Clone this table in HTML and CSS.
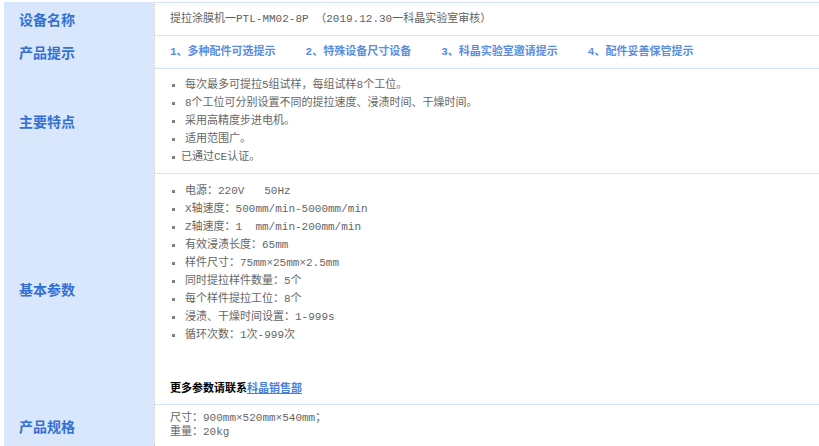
FILE: index.html
```html
<!DOCTYPE html>
<html lang="zh-CN">
<head>
    <meta charset="UTF-8">
    <meta name="viewport" content="width=device-width, initial-scale=1.0">
    <title>提拉涂膜机 PTL-MM02-8P</title>
    <link rel="stylesheet" href="styles.css">
</head>
<body>
    <div class="spec">
        <div class="row">
            <div class="label">设备名称</div>
            <div class="value single">提拉涂膜机一PTL-MM02-8P&nbsp;（2019.12.30一科晶实验室审核）</div>
        </div>
        <div class="row">
            <div class="label">产品提示</div>
            <div class="value single tips">
                <span>1、多种配件可选提示</span>
                <span>2、特殊设备尺寸设备</span>
                <span>3、科晶实验室邀请提示</span>
                <span>4、配件妥善保管提示</span>
            </div>
        </div>
        <div class="row">
            <div class="label">主要特点</div>
            <div class="value block features">
                <ul class="dots">
                    <li>每次最多可提拉5组试样，每组试样8个工位。</li>
                    <li>8个工位可分别设置不同的提拉速度、浸渍时间、干燥时间。</li>
                    <li>采用高精度步进电机。</li>
                    <li>适用范围广。</li>
                    <li class="tight">已通过CE认证。</li>
                </ul>
            </div>
        </div>
        <div class="row">
            <div class="label">基本参数</div>
            <div class="value block params">
                <ul class="dots">
                    <li>电源：220V&nbsp;&nbsp;&nbsp;50Hz</li>
                    <li>X轴速度：500mm/min-5000mm/min</li>
                    <li>Z轴速度：1&nbsp;&nbsp;mm/min-200mm/min</li>
                    <li>有效浸渍长度：65mm</li>
                    <li>样件尺寸：75mm×25mm×2.5mm</li>
                    <li>同时提拉样件数量：5个</li>
                    <li>每个样件提拉工位：8个</li>
                    <li>浸渍、干燥时间设置：1-999s</li>
                    <li>循环次数：1次-999次</li>
                </ul>
                <p class="more">更多参数请联系<a href="#">科晶销售部</a></p>
            </div>
        </div>
        <div class="row">
            <div class="label">产品规格</div>
            <div class="value block size">
                <p>尺寸：900mm×520mm×540mm；</p>
                <p>重量：20kg</p>
            </div>
        </div>
    </div>
</body>
</html>
```

FILE: styles.css
```css
body {
    margin: 0;
    padding: 2px 0 0 4px;
    background-color: #fff;
    font-family: "Liberation Mono", "Noto Sans CJK SC", monospace;
    font-size: 11px;
    color: #666;
}
.row {
    display: grid;
    grid-template-columns: 150px 1fr;
}
.label {
    display: flex;
    align-items: center;
    padding-left: 15px;
    background-color: #d9e7fd;
    font-family: "Noto Sans CJK SC", sans-serif;
    font-size: 14px;
    font-weight: bold;
    color: #3470d3;
}
.value {
    border-top: 1px solid #d6e4fb;
    border-left: 1px dotted #c4c4c4;
    padding-left: 15px;
}
.single {
    line-height: 32px;
    color: #5f5f5f;
}
.tips {
    display: flex;
    gap: 30px;
    font-weight: bold;
    color: #5a8ddf;
}
.block {
    line-height: 18px;
}
.features {
    padding-top: 7px;
    padding-bottom: 7px;
}
.params {
    padding-top: 8px;
    padding-bottom: 8px;
}
.dots {
    list-style: none;
    margin: 0;
    padding: 0;
}
.dots li::before {
    content: "";
    display: inline-block;
    width: 3px;
    height: 3px;
    margin: 0 10px 0 2px;
    background-color: #8a8078;
    vertical-align: middle;
}
.dots li.tight::before {
    margin-right: 6px;
}
.more {
    margin: 34px 0 0;
    font-family: "Noto Sans CJK SC", sans-serif;
    font-weight: bold;
    color: #000;
}
.more a {
    color: #4a7fd8;
}
.size {
    padding-top: 6px;
    padding-bottom: 9px;
    line-height: 14px;
}
.size p {
    margin: 0;
}
```
